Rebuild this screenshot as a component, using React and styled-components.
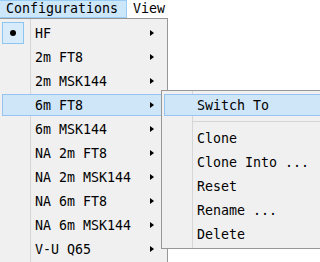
import React from "react";
import styled, { createGlobalStyle } from "styled-components";

const GlobalStyle = createGlobalStyle`
    html, body {
        margin: 0;
        padding: 0;
        background: #ffffff;
        overflow: hidden;
    }
    body {
        font-family: "DejaVu Sans Mono", "Liberation Mono", monospace;
        font-size: 13.3px;
        color: #000000;
    }
`;

const Window = styled.div`
    position: relative;
    width: 320px;
    height: 262px;
    overflow: hidden;
    background: #ffffff;
`;

const MenuBar = styled.div`
    display: flex;
    height: 18px;
    background: #ffffff;
`;

const MenuTitle = styled.div`
    box-sizing: border-box;
    height: 18px;
    line-height: 16px;
    padding: 0 8px 0 6px;
    border: 1px solid ${(p) => (p.$open ? "#99cdf5" : "transparent")};
    border-left: none;
    background: ${(p) => (p.$open ? "#cce6fa" : "transparent")};
    white-space: pre;
`;

const Menu = styled.div`
    position: absolute;
    top: ${(p) => p.$top}px;
    left: ${(p) => p.$left}px;
    width: ${(p) => p.$width}px;
    box-sizing: border-box;
    border: 1px solid #979797;
    padding: 2px;
    background:
        linear-gradient(to right, transparent 30px, #d6d6d6 30px, #d6d6d6 31px, transparent 31px),
        #f0f0f0;
    display: flex;
    flex-direction: column;
    z-index: ${(p) => p.$layer};
`;

const Item = styled.div`
    box-sizing: border-box;
    height: 22px;
    margin: 1px 0;
    display: flex;
    align-items: center;
    border: 1px solid ${(p) => (p.$active ? "#94c4ef" : "transparent")};
    background: ${(p) => (p.$active ? "#cfe5f8" : "transparent")};
    white-space: pre;
`;

const Gutter = styled.div`
    width: 27px;
    height: 20px;
    flex: none;
    position: relative;
`;

const CheckBox = styled.div`
    position: absolute;
    left: -1px;
    top: -1px;
    box-sizing: border-box;
    width: 22px;
    height: 22px;
    border: 1px solid #8ec6f2;
    background: #d8ebfa;
    display: flex;
    align-items: center;
    justify-content: center;
`;

const Dot = styled.div`
    width: 6px;
    height: 6px;
    border-radius: 50%;
    background: #000000;
`;

const Label = styled.span`
    flex: 1;
    margin-left: 5px;
    line-height: 20px;
    padding-top: 1px;
`;

const Arrow = styled.span`
    width: 0;
    height: 0;
    margin-right: 10px;
    border-left: 4px solid #000000;
    border-top: 3.5px solid transparent;
    border-bottom: 3.5px solid transparent;
`;

const Separator = styled.div`
    height: 9px;
    display: flex;
    align-items: center;
    padding-left: 29px;

    &::after {
        content: "";
        flex: 1;
        height: 1px;
        background: #d6d6d6;
    }
`;

const configs = [
    "HF",
    "2m FT8",
    "2m MSK144",
    "6m FT8",
    "6m MSK144",
    "NA 2m FT8",
    "NA 2m MSK144",
    "NA 6m FT8",
    "NA 6m MSK144",
    "V-U Q65",
];

const actions = ["Clone", "Clone Into ...", "Reset", "Rename ...", "Delete"];

const App = () => {
    return (
        <Window>
            <GlobalStyle />
            <MenuBar>
                <MenuTitle $open>Configurations</MenuTitle>
                <MenuTitle>View</MenuTitle>
            </MenuBar>

            <Menu $top={18} $left={-1} $width={169} $layer={1}>
                {configs.map((name, i) => (
                    <Item key={name} $active={name === "6m FT8"}>
                        <Gutter>
                            {i === 0 && (
                                <CheckBox>
                                    <Dot />
                                </CheckBox>
                            )}
                        </Gutter>
                        <Label>{name}</Label>
                        <Arrow />
                    </Item>
                ))}
            </Menu>

            <Menu $top={90} $left={161} $width={172} $layer={2}>
                <Item $active>
                    <Gutter />
                    <Label>Switch To</Label>
                </Item>
                <Separator />
                {actions.map((name) => (
                    <Item key={name}>
                        <Gutter />
                        <Label>{name}</Label>
                    </Item>
                ))}
            </Menu>
        </Window>
    );
};

export default App;
